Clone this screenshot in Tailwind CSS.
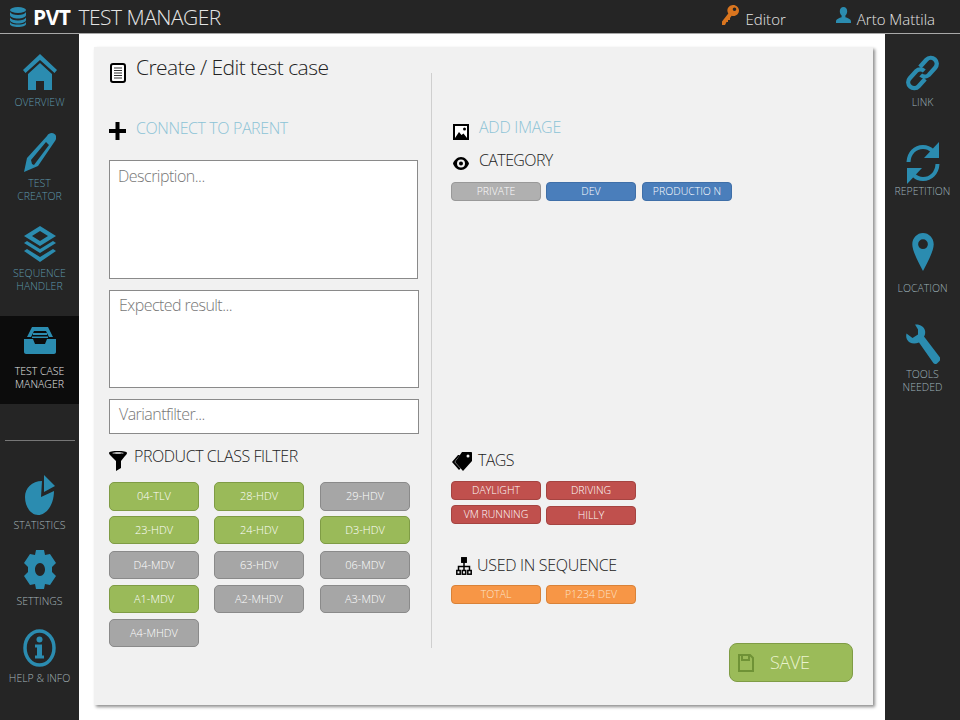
<!DOCTYPE html>
<html lang="en">
<head>
    <meta charset="UTF-8">
    <meta name="viewport" content="width=device-width, initial-scale=1.0">
    <title>PVT Test Manager</title>
    <script src="https://cdn.jsdelivr.net/npm/@tailwindcss/browser@4"></script>
</head>
<body class="font-['Open_Sans',sans-serif] font-light">
<div class="w-[960px] h-[720px] overflow-hidden flex flex-col bg-white">

    <!-- Top bar -->
    <header class="h-[34px] shrink-0 bg-[#252525] border-b border-[#a8a8a8] flex items-center text-[#e4e4e4]">
        <svg class="ml-[10px] mr-[7px] w-[16px] h-[20px]" viewBox="0 0 16 20" fill="#2b8cb0">
            <ellipse cx="8" cy="3" rx="8" ry="3"/>
            <path d="M0 5c1 2 4 3 8 3s7-1 8-3v3c0 2-4 3.500-8 3.500S0 10 0 8z"/>
            <path d="M0 10.500c1 2 4 3 8 3s7-1 8-3V13c0 2-4 3.500-8 3.500S0 15 0 13z"/>
            <path d="M0 15c1 2 4 2.500 8 2.500s7-.5 8-2.500v2c0 2-4 3-8 3s-8-1-8-3z"/>
        </svg>
        <span class="font-bold text-[21px] tracking-[-0.5px] text-white leading-none mt-[2px]">PVT</span>
        <span class="ml-[8px] text-[21px] tracking-[-0.5px] leading-none mt-[2px]">TEST MANAGER</span>
        <svg class="ml-auto w-[17px] h-[20px] -mt-[3px]" viewBox="0 0 17 20" fill="#d9751f">
            <path d="M11 0c3.500 0 6 2.500 6 5.500S14.500 11 11.500 11c-.7 0-1.300-.1-1.800-.3L8 13v2H6v2H4.500L3 20H0v-3.500l6.300-8A5.500 5.500 0 0 1 11 0zm1.500 2.500a1.800 1.800 0 1 0 0 3.600 1.800 1.800 0 0 0 0-3.600z" fill-rule="evenodd"/>
        </svg>
        <span class="ml-[7px] text-[15px] leading-none mt-[5px]">Editor</span>
        <svg class="ml-[50px] w-[15px] h-[16px] -mt-[3px]" viewBox="0 0 15 16" fill="#2b8cb0">
            <path d="M7.500 0c2.300 0 3.700 1.700 3.700 4.200 0 1.800-.8 3.500-1.800 4.400v1.600c2 .7 5.600 1.600 5.600 4.200V16H0v-1.600c0-2.600 3.600-3.500 5.600-4.200V8.600c-1-.9-1.800-2.600-1.800-4.400C3.800 1.700 5.200 0 7.500 0z"/>
        </svg>
        <span class="ml-[6px] mr-[25px] text-[15px] leading-none mt-[5px]">Arto Mattila</span>
    </header>

    <div class="flex flex-1 min-h-0">
        <!-- Left navigation -->
        <nav class="w-[79px] shrink-0 bg-[#252525] flex flex-col items-center text-[10.500px] leading-[13px] text-center text-[#5e97ab]">
            <a class="w-full h-[92px] pt-[20px] flex flex-col items-center">
                <svg class="w-[34px] h-[36px]" viewBox="0 0 34 36" fill="#2b8cb0">
                    <path d="M17 0l17 16-2.500 3L17 6 2.500 19 0 16z"/>
                    <path d="M5 20L17 9l12 11v16h-8v-9h-8v9H5z"/>
                </svg>
                <span class="mt-[6px]">OVERVIEW</span>
            </a>
            <a class="w-full h-[98px] flex flex-col items-center">
                <svg class="mt-[7px] w-[32px] h-[39px]" viewBox="0 0 32 39" fill="#2b8cb0">
                    <path fill-rule="evenodd" d="M23 3c2-3.500 5.500-3.500 7.500-2s2.500 4 .5 7L14 33 0 39l3-14zM22 9L7 27l1 4 2 1 15-20z"/>
                </svg>
                <span class="mt-[5px]">TEST<br>CREATOR</span>
            </a>
            <a class="w-full h-[92px] flex flex-col items-center">
                <svg class="mt-[2px] w-[32px] h-[36px]" viewBox="0 0 32 36" fill="#2b8cb0">
                    <path fill-rule="evenodd" d="M16 0l16 10-16 10L0 10zm0 5L8 10l8 5 8-5z"/>
                    <path d="M3 15l13 8 13-8 3 2-16 10L0 17z"/>
                    <path d="M3 23l13 8 13-8 3 2-16 11L0 25z"/>
                </svg>
                <span class="mt-[5px]">SEQUENCE<br>HANDLER</span>
            </a>
            <a class="w-full h-[88px] bg-[#0c0c0c] flex flex-col items-center text-[#e8e8e8]">
                <svg class="mt-[11px] w-[32px] h-[27px]" viewBox="0 0 32 27" fill="#2b8cb0">
                    <path d="M8 0h16l5 10h-4l-3-6H10l-3 6H3z"/>
                    <path d="M9 6h14v2H9zM8 9.500h16V11H8z"/>
                    <path d="M0 12h9l2 5h10l2-5h9v13c0 1-1 2-2 2H2c-1 0-2-1-2-2z"/>
                </svg>
                <span class="mt-[11px]">TEST CASE<br>MANAGER</span>
            </a>
            <div class="mt-[36px] w-[70px] h-px bg-[#777]"></div>
            <a class="w-full mt-[34px] flex flex-col items-center text-[#a5b5ba]">
                <svg class="w-[30px] h-[40px]" viewBox="0 0 30 40" fill="#2b8cb0">
                    <path d="M17 6L16 22 29 16C29 29 22 40 13 40 6 40 0 32 0 22 0 13 7 6 17 6z"/>
                    <path d="M19 0l11 11-11 6z"/>
                </svg>
                <span class="mt-[4px]">STATISTICS</span>
            </a>
            <a class="w-full mt-[18px] flex flex-col items-center text-[#a5b5ba]">
                <svg class="w-[32px] h-[39px]" viewBox="0 0 32 39" fill="#2b8cb0">
                    <path fill-rule="evenodd" d="M12 0h8l1 5 5-1 6 9-4 4v5l4 4-6 9-5-1-1 5h-8l-1-5-5 1-6-9 4-4v-5L0 13l6-9 5 1zm4 13c-3 0-5 3-5 6.500S13 26 16 26s5-3 5-6.500S19 13 16 13z"/>
                </svg>
                <span class="mt-[6px]">SETTINGS</span>
            </a>
            <a class="w-full mt-[21px] flex flex-col items-center text-[#a5b5ba]">
                <svg class="w-[33px] h-[38px]" viewBox="0 0 33 38" fill="#2b8cb0">
                    <ellipse cx="16.500" cy="19" rx="14.500" ry="17" fill="none" stroke="#2b8cb0" stroke-width="3.500"/>
                    <circle cx="16.500" cy="10.500" r="3"/>
                    <path d="M12 15.500h7v11h2v3h-9v-3h2v-8h-2z"/>
                </svg>
                <span class="mt-[5px]">HELP &amp; INFO</span>
            </a>
        </nav>

        <!-- Main area -->
        <main class="flex-1 min-w-0 pl-[15px] pr-[12px] pt-[13px]">
            <div class="w-[779px] h-[658px] bg-[#f1f1f1] shadow-[2px_2px_3px_#8f8f8f] flex text-[#222]">

                <!-- Left column -->
                <section class="w-[337px] shrink-0 pl-[15px] flex flex-col">
                    <div class="h-[40px] flex">
                        <svg class="mt-[16px] ml-px w-[16px] h-[20px]" viewBox="0 0 16 20">
                            <rect x="1" y="1" width="14" height="18" rx="2" fill="#fff" stroke="#000" stroke-width="2"/>
                            <path d="M4 5h8M4 7.500h8M4 10h8M4 12.500h8M4 15h8" stroke="#333" stroke-width="1.200"/>
                        </svg>
                        <h1 class="ml-[10px] mt-[5px] text-[21px] tracking-[-0.55px] leading-[30px] font-light text-[#222]">Create / Edit test case</h1>
                    </div>
                    <div class="mt-[30px] h-[24px] flex items-center">
                        <svg class="w-[17px] h-[18px] mt-[4px]" viewBox="0 0 17 18" fill="#000">
                            <path d="M6.500 0h4v7H17v4h-6.500v7h-4v-7H0V7h6.500z"/>
                        </svg>
                        <span class="ml-[10px] -mt-[2px] text-[16px] tracking-[-0.4px] leading-none text-[#8cc3d6]">CONNECT TO PARENT</span>
                    </div>
                    <div class="mt-[19px] w-[309px] h-[119px] bg-white border border-[#8a8a8a] pl-[8px] pt-[4px] text-[16px] tracking-[-0.5px] leading-[22px] text-[#777]">Description...</div>
                    <div class="mt-[11px] w-[310px] h-[98px] bg-white border border-[#8a8a8a] pl-[9px] pt-[3px] text-[16px] tracking-[-0.55px] leading-[22px] text-[#777]">Expected result...</div>
                    <div class="mt-[11px] w-[310px] h-[35px] bg-white border border-[#8a8a8a] pl-[9px] pt-[3px] text-[16px] tracking-[-0.55px] leading-[22px] text-[#777]">Variantfilter...</div>
                    <div class="mt-[11px] h-[24px] flex">
                        <svg class="mt-[6px] w-[18px] h-[20px]" viewBox="0 0 18 20" fill="#000">
                            <path d="M0 2c0-1.500 4-2 9-2s9 .5 9 2c0 1-1 2-2 3l-4 5v7l-5 3V10L2 5C1 4 0 3 0 2zm3 0c1.500.6 3.500.8 6 .8s4.500-.2 6-.8c-1.500-.5-3.500-.8-6-.8S4.500 1.500 3 2z" fill-rule="evenodd"/>
                        </svg>
                        <span class="ml-[7px] text-[16px] tracking-[-0.45px] leading-[22px]">PRODUCT CLASS FILTER</span>
                    </div>
                    <div class="mt-[13px] grid grid-cols-[105px_106px_90px] text-[11px] text-white text-center">
                        <div class="w-[90px] h-[29px] leading-[26px] mb-[5px] rounded-[5px] border border-[#7f9c45] bg-[#9aba59]">04-TLV</div>
                        <div class="w-[90px] h-[29px] leading-[26px] mb-[5px] rounded-[5px] border border-[#7f9c45] bg-[#9aba59]">28-HDV</div>
                        <div class="w-[90px] h-[29px] leading-[26px] mb-[5px] rounded-[5px] border border-[#8a8a8a] bg-[#a6a6a6]">29-HDV</div>
                        <div class="w-[90px] h-[28px] leading-[25px] mb-[7px] rounded-[5px] border border-[#7f9c45] bg-[#9aba59]">23-HDV</div>
                        <div class="w-[90px] h-[28px] leading-[25px] mb-[7px] rounded-[5px] border border-[#7f9c45] bg-[#9aba59]">24-HDV</div>
                        <div class="w-[90px] h-[28px] leading-[25px] mb-[7px] rounded-[5px] border border-[#7f9c45] bg-[#9aba59]">D3-HDV</div>
                        <div class="w-[90px] h-[28px] leading-[25px] mb-[6px] rounded-[5px] border border-[#8a8a8a] bg-[#a6a6a6]">D4-MDV</div>
                        <div class="w-[90px] h-[28px] leading-[25px] mb-[6px] rounded-[5px] border border-[#8a8a8a] bg-[#a6a6a6]">63-HDV</div>
                        <div class="w-[90px] h-[28px] leading-[25px] mb-[6px] rounded-[5px] border border-[#8a8a8a] bg-[#a6a6a6]">06-MDV</div>
                        <div class="w-[90px] h-[28px] leading-[25px] mb-[6px] rounded-[5px] border border-[#7f9c45] bg-[#9aba59]">A1-MDV</div>
                        <div class="w-[90px] h-[28px] leading-[25px] mb-[6px] rounded-[5px] border border-[#8a8a8a] bg-[#a6a6a6]">A2-MHDV</div>
                        <div class="w-[90px] h-[28px] leading-[25px] mb-[6px] rounded-[5px] border border-[#8a8a8a] bg-[#a6a6a6]">A3-MDV</div>
                        <div class="w-[90px] h-[28px] leading-[25px] rounded-[5px] border border-[#8a8a8a] bg-[#a6a6a6]">A4-MHDV</div>
                    </div>
                </section>

                <!-- Divider -->
                <div class="mt-[26px] w-px h-[575px] bg-[#cfcfcf]"></div>

                <!-- Right column -->
                <section class="flex-1 pl-[19px] flex flex-col">
                    <div class="mt-[69px] h-[22px] flex items-center">
                        <svg class="ml-[2px] w-[16px] h-[16px] mt-[9px]" viewBox="0 0 16 16">
                            <rect x="1" y="1" width="14" height="14" fill="#fff" stroke="#000" stroke-width="2"/>
                            <path d="M2 14l4-6 2.500 3 2-1.500L14 14z" fill="#000"/>
                            <circle cx="11.500" cy="5" r="1.500" fill="#000"/>
                        </svg>
                        <span class="ml-[10px] text-[16px] tracking-[-0.25px] leading-none text-[#8cc3d6]">ADD IMAGE</span>
                    </div>
                    <div class="mt-[11px] h-[22px] flex items-center">
                        <svg class="ml-[2px] w-[16px] h-[13px] mt-[7px]" viewBox="0 0 16 13" fill="#000">
                            <path fill-rule="evenodd" d="M8 0c4 0 7 3.500 8 6.500C15 9.500 12 13 8 13S1 9.500 0 6.500C1 3.500 4 0 8 0zm0 2.500a4 4 0 1 0 0 8 4 4 0 0 0 0-8z"/>
                            <circle cx="8" cy="6.500" r="2"/>
                        </svg>
                        <span class="ml-[10px] text-[16px] tracking-[-0.6px] leading-none">CATEGORY</span>
                    </div>
                    <div class="mt-[11px] flex text-[10.500px] leading-[16px] text-white text-center">
                        <div class="w-[90px] h-[19px] rounded-[4px] border border-[#999] bg-[#b0b0b0]">PRIVATE</div>
                        <div class="ml-[5px] w-[90px] h-[19px] rounded-[4px] border border-[#3f6fa8] bg-[#4a7ebb]">DEV</div>
                        <div class="ml-[6px] w-[90px] h-[19px] rounded-[4px] border border-[#3f6fa8] bg-[#4a7ebb]">PRODUCTIO N</div>
                    </div>

                    <div class="mt-[248px] h-[24px] flex">
                        <svg class="mt-[2px] w-[21px] h-[20px]" viewBox="0 0 21 20" fill="#000">
                            <path fill-rule="evenodd" d="M11 1h9c.6 0 1 .4 1 1v8l-9 10-8-9zm6 2.500a1.500 1.500 0 1 0 0 3 1.500 1.500 0 0 0 0-3z"/>
                            <path d="M7 4L1 11l7 8 1.500-1.500L3.500 11 9 4z"/>
                        </svg>
                        <span class="ml-[6px] text-[16px] tracking-[-0.6px] leading-[22px]">TAGS</span>
                    </div>
                    <div class="mt-[8px] flex text-[10.500px] leading-[16px] text-white text-center">
                        <div class="flex flex-col gap-[5px]">
                            <div class="w-[90px] h-[19px] rounded-[4px] border border-[#a54441] bg-[#c0504d]">DAYLIGHT</div>
                            <div class="w-[90px] h-[19px] rounded-[4px] border border-[#a54441] bg-[#c0504d]">VM RUNNING</div>
                        </div>
                        <div class="ml-[5px] flex flex-col gap-[6px]">
                            <div class="w-[90px] h-[19px] rounded-[4px] border border-[#a54441] bg-[#c0504d]">DRIVING</div>
                            <div class="w-[90px] h-[19px] rounded-[4px] border border-[#a54441] bg-[#c0504d]">HILLY</div>
                        </div>
                    </div>

                    <div class="mt-[29px] h-[24px] flex">
                        <svg class="mt-[3px] ml-[5px] w-[16px] h-[18px]" viewBox="0 0 16 18" fill="none" stroke="#000" stroke-width="1.500">
                            <rect x="5.800" y=".8" width="4.400" height="4.400" fill="#000"/>
                            <path d="M8 5v5M2.500 13.500V9.500h11v4M8 9.500v4"/>
                            <rect x=".8" y="13.500" width="3.400" height="3.700"/>
                            <rect x="6.300" y="13.500" width="3.400" height="3.700"/>
                            <rect x="11.800" y="13.500" width="3.400" height="3.700"/>
                        </svg>
                        <span class="ml-[5px] text-[16px] tracking-[-0.3px] leading-[22px]">USED IN SEQUENCE</span>
                    </div>
                    <div class="mt-[7px] flex text-[10.500px] leading-[16px] text-[#fbe3cc] text-center">
                        <div class="w-[90px] h-[19px] rounded-[4px] border border-[#d98238] bg-[#f79646]">TOTAL</div>
                        <div class="ml-[5px] w-[90px] h-[19px] rounded-[4px] border border-[#d98238] bg-[#f79646]">P1234 DEV</div>
                    </div>

                    <button class="mt-[39px] ml-[278px] w-[124px] h-[39px] rounded-[8px] border border-[#7f9c45] bg-[#9bbb59] flex items-center text-[#eaf3cf] text-[18px] tracking-[-0.3px] font-light">
                        <svg class="ml-[8px] w-[16px] h-[18px]" viewBox="0 0 16 18" fill="none" stroke="#6f9236" stroke-width="2">
                            <path d="M1 1h11l3 3v13H1z"/>
                            <path d="M4 1v5h7V1" />
                        </svg>
                        <span class="ml-[16px]">SAVE</span>
                    </button>
                </section>
            </div>
        </main>

        <!-- Right navigation -->
        <nav class="w-[75px] shrink-0 bg-[#262626] flex flex-col items-center text-[10.500px] leading-[13px] text-center text-[#9fb3ba]">
            <a class="w-full pt-[21px] flex flex-col items-center">
                <svg class="w-[33px] h-[36px]" viewBox="0 0 33 36" fill="none" stroke="#2b8cb0" stroke-width="4">
                    <g transform="translate(16.500 18) rotate(-48) scale(1.080) translate(-16.500 -18)">
                        <path d="M14 23.500H5a5.500 5.500 0 0 1 0-11h9a5.500 5.500 0 0 1 5 5.500"/>
                        <path d="M19 12.500h9a5.500 5.500 0 0 1 0 11h-9a5.500 5.500 0 0 1-5-5.500"/>
                    </g>
                </svg>
                <span class="mt-[5px]">LINK</span>
            </a>
            <a class="w-full mt-[33px] flex flex-col items-center">
                <svg class="w-[34px] h-[42px]" viewBox="0 0 34 42" fill="none" stroke="#2b8cb0" stroke-width="4">
                    <path d="M2.500 20C3 11 9 5 17 5c4 0 7 1.500 9.500 4"/>
                    <path d="M31.500 22C31 31 25 37 17 37c-4 0-7-1.500-9.500-4"/>
                    <path d="M33 0v16H18z" fill="#2b8cb0" stroke="none"/>
                    <path d="M1 42V26h15z" fill="#2b8cb0" stroke="none"/>
                </svg>
                <span class="mt-[1px]">REPETITION</span>
            </a>
            <a class="w-full mt-[35px] flex flex-col items-center">
                <svg class="w-[22px] h-[38px]" viewBox="0 0 22 39" fill="#2b8cb0">
                    <path fill-rule="evenodd" d="M11 0c6 0 11 5 11 11.500C22 19 15 31 11 39 7 31 0 19 0 11.500 0 5 5 0 11 0zm0 6.500a5 5 0 1 0 0 10 5 5 0 0 0 0-10z"/>
                </svg>
                <span class="mt-[11px]">LOCATION</span>
            </a>
            <a class="w-full mt-[28px] flex flex-col items-center">
                <svg class="w-[34px] h-[42px]" viewBox="0 0 34 39" fill="#2b8cb0">
                    <path d="M9 0c5-.5 9 2 10 6 .5 2.500 0 4.500-1 6l16 21c1 1.500 0 3-1 4l-2 2c-1.500 1-3 .5-4-1L13 18c-5 2-10 1-12-3-1-2-1-4-.5-6l6 4.500L12 10 12 5z"/>
                </svg>
                <span class="mt-[3px]">TOOLS<br>NEEDED</span>
            </a>
        </nav>
    </div>
</div>
</body>
</html>
